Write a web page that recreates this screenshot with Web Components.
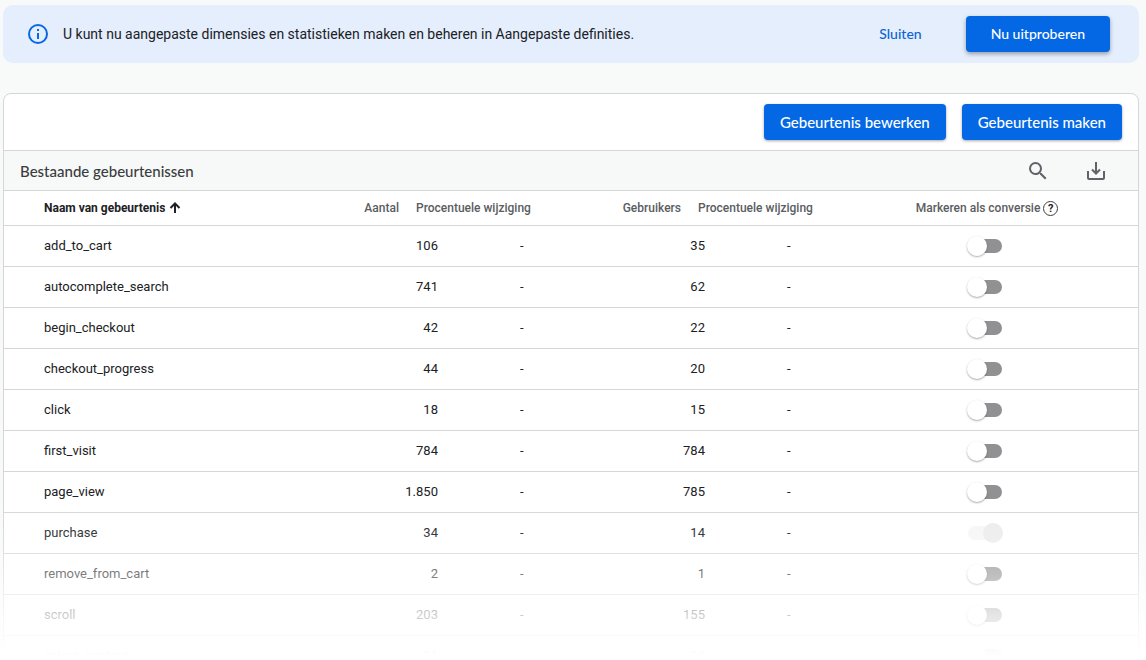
<!DOCTYPE html>
<html lang="nl">
<head>
<meta charset="utf-8">
<title>Gebeurtenissen</title>
<style>
  body { margin: 0; background: #f8f9f9; font: 13px/20px Roboto, "Liberation Sans", sans-serif; color: #202124; }
</style>
</head>
<body>
<events-page>
  <info-banner slot="banner">
    U kunt nu aangepaste dimensies en statistieken maken en beheren in Aangepaste definities.
    <action-button slot="actions" variant="text">Sluiten</action-button>
    <action-button slot="actions" variant="wide">Nu uitproberen</action-button>
  </info-banner>
  <events-card heading="Bestaande gebeurtenissen">
    <action-button slot="toolbar">Gebeurtenis bewerken</action-button>
    <action-button slot="toolbar">Gebeurtenis maken</action-button>
    <events-table></events-table>
  </events-card>
</events-page>

<script>
  class BaseElement extends HTMLElement {
    constructor() {
      super();
      this.attachShadow({ mode: "open" }).innerHTML =
        "<style>*{box-sizing:border-box}</style>" + this.render();
    }
  }

  customElements.define("events-page", class extends BaseElement {
    render() {
      return `
        <style>
          :host { display: block; position: relative; height: 100vh; overflow: hidden; }
          main { display: flex; flex-direction: column; gap: 30px; padding: 5px 7px 0 3px; }
          .fade { position: absolute; left: 0; right: 0; bottom: 0; height: 160px; pointer-events: none;
            background: linear-gradient(rgba(255,255,255,0) 0, rgba(255,255,255,.1) 32px, rgba(255,255,255,.4) 73px, rgba(255,255,255,.76) 114px, rgba(255,255,255,.96) 148px, #fff 157px); }
        </style>
        <main><slot name="banner"></slot><slot></slot></main>
        <div class="fade"></div>`;
    }
  });

  customElements.define("info-banner", class extends BaseElement {
    render() {
      return `
        <style>
          :host { display: flex; align-items: center; height: 58px; padding: 0 29px 0 24px;
            border-radius: 10px; background: #e4eefd; font-size: 14px; }
          svg { flex: none; margin-right: 14px; }
          p { flex: 1; margin: 0; }
          .actions { display: flex; align-items: center; gap: 28px; }
        </style>
        <svg width="22" height="22" viewBox="0 0 22 22" fill="none" stroke="#0868e4" stroke-width="2" aria-hidden="true">
          <circle cx="11" cy="11" r="9"/><path d="M11 10v6M11 6v2"/>
        </svg>
        <p><slot></slot></p>
        <div class="actions"><slot name="actions"></slot></div>`;
    }
  });

  customElements.define("action-button", class extends BaseElement {
    render() {
      return `
        <style>
          :host { display: block; }
          button { display: block; height: 36px; padding: 0 16px; border: 0; border-radius: 4px; cursor: pointer;
            background: #0468e5; color: #fff; font: 500 15px/20px Lato, sans-serif;
            box-shadow: 0 1px 3px rgba(0,0,0,.35); }
          :host([variant="wide"]) button { padding: 0 25px; font-size: 14px;
            box-shadow: 0 2px 4px rgba(0,0,0,.35); }
          :host([variant="text"]) button { background: none; color: #0b63d4; font-size: 14px; box-shadow: none; }
        </style>
        <button type="button"><slot></slot></button>`;
    }
  });

  customElements.define("events-card", class extends BaseElement {
    render() {
      return `
        <style>
          :host { display: block; border: 1px solid #d4d6d8; border-radius: 8px; background: #fff; overflow: hidden; }
          .toolbar { display: flex; justify-content: flex-end; align-items: center; gap: 16px; height: 56px; padding: 0 16px; }
          .bar { display: flex; align-items: center; gap: 34px; height: 41px; padding: 0 30px 0 16px;
            border: solid #d4d6d8; border-width: 1px 0; background: #f7f9f8; }
          h2 { flex: 1; margin: 0; font: 500 15px/20px Lato, sans-serif; color: #3a3d40; }
          button { width: 24px; height: 24px; padding: 0; border: 0; background: none; color: #5f6368; cursor: pointer; }
          svg { display: block; }
        </style>
        <div class="toolbar"><slot name="toolbar"></slot></div>
        <div class="bar">
          <h2>${this.getAttribute("heading")}</h2>
          <button type="button" aria-label="Zoeken">
            <svg width="24" height="24" viewBox="0 0 24 24" fill="currentColor"><path d="M15.500 14h-.79l-.28-.27A6.470 6.470 0 0 0 16 9.500 6.500 6.500 0 1 0 9.500 16c1.610 0 3.090-.59 4.230-1.570l.27.28v.79l5 4.990L20.490 19l-4.990-5zm-6 0C7.010 14 5 11.990 5 9.500S7.010 5 9.500 5 14 7.010 14 9.500 11.990 14 9.500 14z"/></svg>
          </button>
          <button type="button" aria-label="Downloaden">
            <svg width="24" height="24" viewBox="0 0 24 24" fill="none" stroke="currentColor" stroke-width="2"><path d="M12 3v11M8 10.500l4 4 4-4M4 12v7q0 1 1 1h14q1 0 1-1v-7"/></svg>
          </button>
        </div>
        <slot></slot>`;
    }
  });

  customElements.define("conversion-switch", class extends BaseElement {
    static observedAttributes = ["label", "locked"];
    attributeChangedCallback() {
      const input = this.shadowRoot.querySelector("input");
      input.setAttribute("aria-label", this.getAttribute("label") || "");
      input.checked = input.disabled = this.hasAttribute("locked");
    }
    render() {
      return `
        <style>
          :host { display: block; width: 36px; margin: 0 auto; }
          input { appearance: none; display: flex; align-items: center; width: 34px; height: 14px; margin: 0 1px;
            border-radius: 7px; background: #919193; cursor: pointer; }
          input::before { content: ""; flex: none; width: 20px; height: 20px; margin-left: -1px; border-radius: 50%;
            background: #fff; box-shadow: 0 1px 2px rgba(60,64,67,.45); }
          input:checked { justify-content: flex-end; }
          input:checked::before { margin-right: -1px; }
          input:disabled { background: #f6f6f6; }
          input:disabled::before { background: #ececed; box-shadow: none; }
        </style>
        <input type="checkbox" role="switch">`;
    }
  });

  const EVENTS = [
    ["add_to_cart", "106", "35"],
    ["autocomplete_search", "741", "62"],
    ["begin_checkout", "42", "22"],
    ["checkout_progress", "44", "20"],
    ["click", "18", "15"],
    ["first_visit", "784", "784"],
    ["page_view", "1.850", "785"],
    ["purchase", "34", "14", true],
    ["remove_from_cart", "2", "1"],
    ["scroll", "203", "155"],
    ["select_content", "21", "20"]
  ];

  customElements.define("events-table", class extends BaseElement {
    render() {
      const rows = EVENTS.map(([name, count, users, locked]) => `
        <tr>
          <td class="name">${name}</td>
          <td class="num" colspan="2">${count}</td><td class="change">-</td>
          <td class="num" colspan="2">${users}</td><td class="change">-</td>
          <td class="mark"><conversion-switch label="${name} markeren als conversie" ${locked ? "locked" : ""}></conversion-switch></td>
        </tr>`).join("");
      return `
        <style>
          :host { display: block; }
          table { width: 100%; table-layout: fixed; border-collapse: separate; border-spacing: 0; }
          .c-num { width: 100px; } .c-in { width: 31px; } .c-change { width: 162px; }
          .c-users { width: 89px; } .c-uin { width: 16px; } .c-uchange { width: 131px; } .c-mark { width: 302px; }
          th, td { height: 41px; padding: 0; border-bottom: 1px solid #d6d7da; white-space: nowrap; text-align: left; }
          th { height: 35px; font-size: 12px; font-weight: 500; color: #5a5d61; }
          .name { padding-left: 40px; }
          th.name { font-weight: 700; color: #202124; }
          .num { text-align: right; }
          th.num { padding-right: 8px; }
          th.delta { padding-left: 9px; }
          td.change { padding-left: 82px; }
          td.mark { padding-right: 4px; }
          th.mark { text-align: center; }
          .label { display: inline-flex; align-items: center; gap: 3px; }
          svg { display: block; }
          .help { display: grid; place-items: center; width: 15px; height: 15px; padding: 0; box-sizing: border-box;
            border: 1px solid #3c4043; border-radius: 50%; background: none; color: #202124; font: 700 11px/13px Roboto, sans-serif; }
        </style>
        <table>
          <colgroup>
            <col><col class="c-num"><col class="c-in"><col class="c-change">
            <col class="c-users"><col class="c-uin"><col class="c-uchange"><col class="c-mark">
          </colgroup>
          <thead>
            <tr>
              <th class="name" aria-sort="ascending"><span class="label">Naam van gebeurtenis
                <svg width="14" height="14" viewBox="0 0 14 14" fill="none" stroke="currentColor" stroke-width="2" aria-hidden="true"><path d="M7 12V3M2.500 7L7 2.500 11.500 7"/></svg></span></th>
              <th class="num">Aantal</th>
              <th class="delta" colspan="2">Procentuele wijziging</th>
              <th class="num">Gebruikers</th>
              <th class="delta" colspan="2">Procentuele wijziging</th>
              <th class="mark"><span class="label">Markeren als conversie
                <button class="help" type="button" aria-label="Hulp">?</button></span></th>
            </tr>
          </thead>
          <tbody>${rows}</tbody>
        </table>`;
    }
  });
</script>
</body>
</html>
